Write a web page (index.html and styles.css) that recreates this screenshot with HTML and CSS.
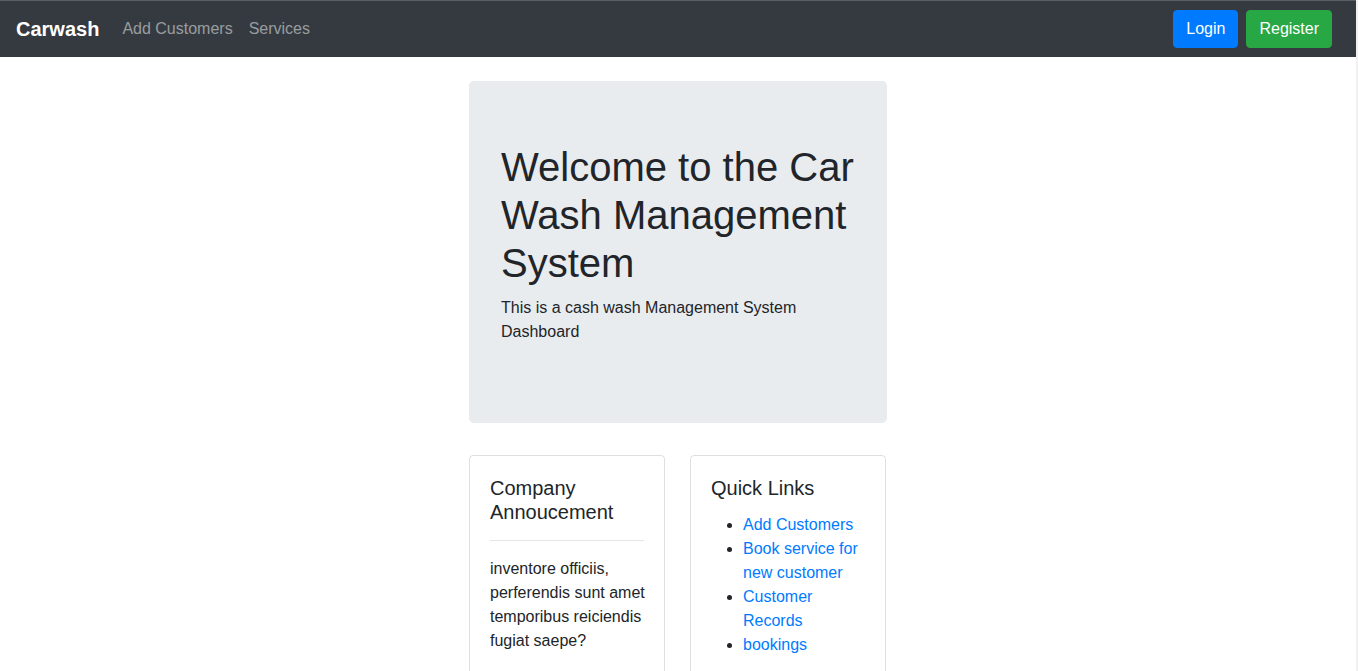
FILE: index.html
```html
<!DOCTYPE html>
<html lang="en">
<head>
<meta charset="utf-8">
<title>Carwash</title>
<link rel="stylesheet" href="styles.css">
</head>
<body>
<nav class="navbar">
  <a class="brand" href="#">Carwash</a>
  <ul class="nav-links">
    <li><a href="#">Add Customers</a></li>
    <li><a href="#">Services</a></li>
  </ul>
  <div class="nav-actions">
    <a class="btn btn-primary" href="#">Login</a>
    <a class="btn btn-success" href="#">Register</a>
  </div>
</nav>
<main class="container">
  <section class="jumbotron">
    <h1>Welcome to the Car Wash Management System</h1>
    <p>This is a cash wash Management System Dashboard</p>
  </section>
  <div class="cards">
    <div class="card">
      <h5>Company Annoucement</h5>
      <hr>
      <p>inventore officiis, perferendis sunt amet temporibus reiciendis fugiat saepe?</p>
    </div>
    <div class="card">
      <h5>Quick Links</h5>
      <ul class="links">
        <li><a href="#">Add Customers</a></li>
        <li><a href="#">Book service for new customer</a></li>
        <li><a href="#">Customer Records</a></li>
        <li><a href="#">bookings</a></li>
      </ul>
    </div>
  </div>
</main>
</body>
</html>
```
FILE: styles.css
```css
html {
  background: #f1f1f1;
}
body {
  margin: 0 2px 0 0;
  background: #fff;
  min-height: 100vh;
  font-family: "Liberation Sans", Arial, sans-serif;
  font-size: 16px;
  line-height: 24px;
  color: #212529;
}
a { text-decoration: none; }

.navbar {
  display: flex;
  align-items: center;
  height: 56px;
  padding: 0 16px;
  background: #343a40;
  border-top: 1px solid #5b5e62;
}
.brand {
  font-size: 20px;
  font-weight: bold;
  line-height: 30px;
  color: #fff;
  margin-right: 15px;
}
.nav-links {
  display: flex;
  list-style: none;
  margin: 0;
  padding: 0;
}
.nav-links a {
  display: block;
  padding: 8px;
  color: rgba(255, 255, 255, 0.5);
}
.nav-actions {
  margin-left: auto;
  display: flex;
}
.btn {
  display: inline-block;
  padding: 6px 12px;
  border: 1px solid transparent;
  border-radius: 4px;
  color: #fff;
  margin-right: 8px;
}
.btn-primary { background: #007bff; border-color: #007bff; }
.btn-success { background: #28a745; border-color: #28a745; }

.container {
  width: 418px;
  margin: 24px auto 0;
}
.jumbotron {
  background: #e9ecef;
  border-radius: 4.8px;
  padding: 62px 32px 64px;
  margin-bottom: 32px;
  height: 342px;
  box-sizing: border-box;
}
.jumbotron h1 {
  font-size: 40px;
  font-weight: 500;
  line-height: 48px;
  margin: 0 0 9px;
}
.jumbotron p {
  margin: 0;
}
.cards {
  display: grid;
  grid-template-columns: 196px 196px;
  column-gap: 25px;
}
.card {
  border: 1px solid rgba(0, 0, 0, 0.125);
  border-radius: 4px;
  padding: 20px 16px 12px 20px;
}
.card h5 {
  font-size: 20px;
  font-weight: 500;
  line-height: 24px;
  margin: 0 0 8px;
}
.card hr {
  border: 0;
  border-top: 1px solid rgba(0, 0, 0, 0.1);
  margin: 16px 4px 16px 0;
}
.card p {
  margin: 0 0 16px;
}
.links {
  margin: 13px 0 16px;
  padding-left: 32px;
}
.links a {
  color: #007bff;
}
```
